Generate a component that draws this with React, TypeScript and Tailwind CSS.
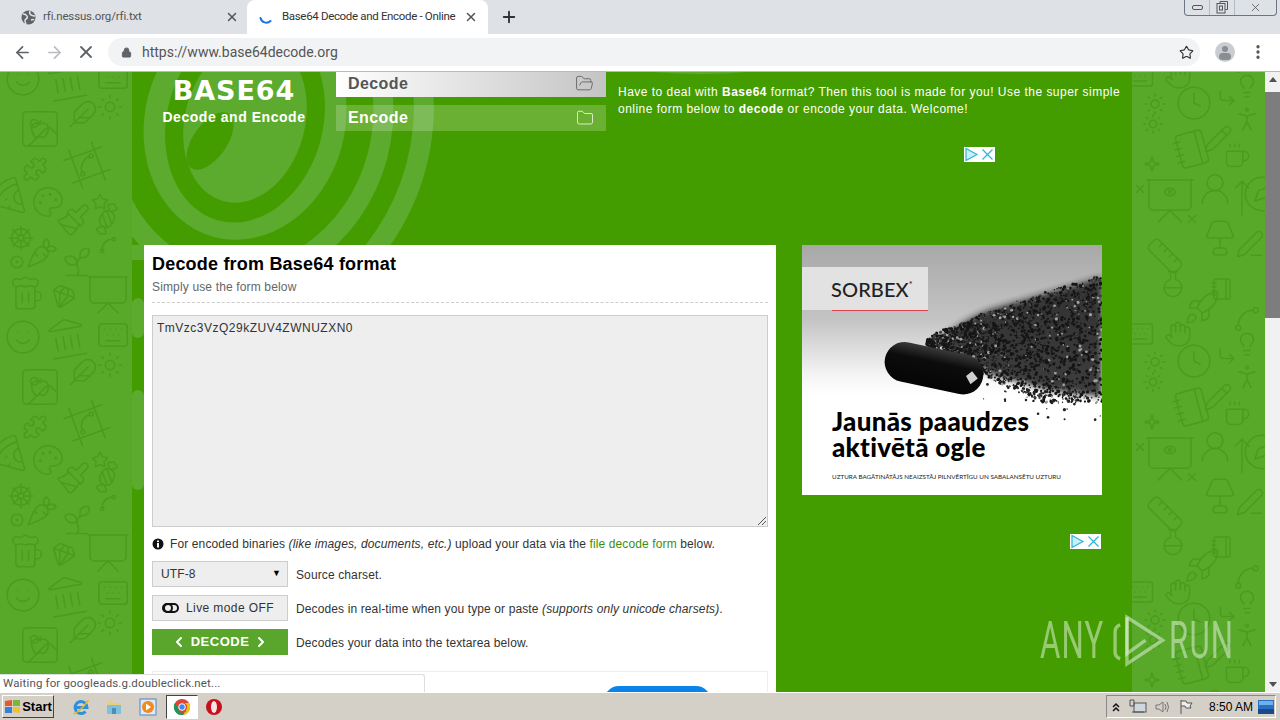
import React from 'react';
import {
  Apple, ArrowLeft, ArrowRight, Beer, Candy, Carrot, ChevronLeft, ChevronRight, CircleDot, Clock, Coffee, Compass, CornerDownRight, EllipsisVertical,
  Feather, FlaskRound, Folder, FolderOpen, Frame, Gem, Hand, Image, Keyboard, Lamp, Landmark, Lightbulb, Lock, MoveUp, Notebook, Palette, Paintbrush,
  PenLine, Pencil, PersonStanding, Pizza, Plus, Presentation, Puzzle, Rocket, Ruler, ShipWheel, Smile, Sparkle, Spline, Sprout, Star, Sun, UserRound, X, Eye,
} from 'lucide-react';

const sans = "font-['Liberation_Sans',Arial,sans-serif]";

type Doodle = [typeof Sun, number, number, number, number?];

// page coordinates of the doodles, the wallpaper repeats every 258px
const leftDoodles: Doodle[] = [
  [ShipWheel, 21, 238, 28], [Carrot, 42, 253, 34], [CircleDot, 17, 262, 14], [Sprout, 77, 262, 36], [Spline, 108, 245, 20],
  [Beer, 27, 293, 38], [Gem, 63, 297, 26, 20], [Presentation, 108, 295, 48], [Smile, 23, 337, 38], [Landmark, 67, 338, 44, -10],
  [Keyboard, 113, 335, 34], [Sun, 110, 365, 28], [Image, 40, 387, 46], [Apple, 40, 387, 20], [Feather, 83, 372, 30],
  [Frame, 87, 423, 48, -20], [Spline, 87, 423, 24, -20], [Puzzle, 35, 427, 26], [Pizza, 7, 453, 42], [Palette, 48, 460, 34],
  [Star, 100, 460, 18], [Paintbrush, 73, 478, 36], [Candy, 107, 477, 32, -20],
];

const rightDoodles: Doodle[] = [
  [Clock, 1194, 103, 38], [Lightbulb, 1247, 86, 26], [CornerDownRight, 1227, 98, 20], [PersonStanding, 1247, 119, 32], [Sun, 1155, 104, 24], [Sun, 1153, 124, 22],
  [Notebook, 1192, 149, 40, -15], [Pencil, 1218, 139, 30], [Coffee, 1237, 156, 28], [Sparkle, 1152, 164, 16], [Presentation, 1170, 201, 56], [Eye, 1170, 192, 13],
  [UserRound, 1215, 189, 38], [MoveUp, 1242, 198, 40], [Compass, 1262, 194, 40], [X, 1140, 189, 14], [X, 1192, 219, 14], [Lamp, 1220, 238, 40], [Ruler, 1165, 256, 40],
  [PenLine, 1250, 244, 30], [FlaskRound, 1173, 284, 30], [Notebook, 1222, 289, 24], [Rocket, 1202, 308, 38], [Hand, 1178, 334, 28], [Spline, 1247, 319, 30], [Keyboard, 1140, 334, 30],
];

function DoodleColumn({ doodles, left, width }: { doodles: Doodle[]; left: number; width: number }) {
  return (
    <div className="shrink-0 bg-[#58a82a]" style={{ width }}>
      <svg width={width} height="620" viewBox={`${left} 72 ${width} 620`} className="block text-[#4b9b1e]">
        {[-516, -258, 0, 258, 516].map(shift => (
          <g key={shift} transform={`translate(0 ${shift})`}>
            {doodles.map(([Icon, cx, cy, size, rot], i) => (
              <g key={i} transform={rot ? `rotate(${rot} ${cx} ${cy})` : undefined}>
                <Icon x={cx - size / 2} y={cy - size / 2} size={size} strokeWidth={1.5} absoluteStrokeWidth />
              </g>
            ))}
          </g>
        ))}
      </svg>
    </div>
  );
}

function AdChoices() {
  return (
    <div className="flex h-[15px] w-[31px] items-center justify-between bg-white">
      <svg width="15" height="15" viewBox="0 0 15 15" fill="none" stroke="#2bb6d6" strokeWidth="1.2">
        <path d="M2 1.5v12L13 7.5z" fill="#cdeef6" />
      </svg>
      <svg width="15" height="15" viewBox="0 0 15 15" fill="none" stroke="#2bb6d6" strokeWidth="1.2">
        <path d="M2.5 2.5l10 10M12.5 2.5l-10 10" />
      </svg>
    </div>
  );
}

// charcoal pile for the ad picture
function Pile() {
  const dots: React.ReactNode[] = [];
  let seed = 7;
  const rnd = () => {
    seed = (seed * 16807) % 2147483647;
    return seed / 2147483647;
  };
  for (let i = 0; i < 2600; i++) {
    const x = 125 + rnd() * 175;
    const t = (x - 125) / 175;
    const top = 93 - 65 * Math.pow(t, 0.8) + rnd() * 6;
    const bottom = 100 + 58 * Math.min(1, t * 1.6);
    const y = top + rnd() * (bottom - top);
    const g = rnd();
    dots.push(<circle key={i} cx={x} cy={y} r={0.6 + rnd() * 1.1} fill={g > 0.94 ? '#a0a0a0' : g > 0.65 ? '#3a3a3a' : '#141414'} />);
  }
  for (let i = 0; i < 36; i++) {
    const x = 170 + rnd() * 130;
    dots.push(<circle key={`s${i}`} cx={x} cy={x > 235 ? 145 + rnd() * 30 : 132 + rnd() * 24} r={0.5 + rnd() * 1.2} fill="#222" />);
  }
  return (
    <svg className="absolute inset-0" width="300" height="250" viewBox="0 0 300 250">
      <defs>
        <filter id="soft"><feGaussianBlur stdDeviation="0.5" /></filter>
        <filter id="softer"><feGaussianBlur stdDeviation="3" /></filter>
        <linearGradient id="gloss" x1="0" y1="0" x2="0" y2="1">
          <stop offset="0" stopColor="#3a3a3a" />
          <stop offset="0.35" stopColor="#0c0c0c" />
          <stop offset="1" stopColor="#050505" />
        </linearGradient>
      </defs>
      <path d="M136 94 Q170 70 190 64 L300 32 L300 152 L250 146 L190 130 Z" fill="#1e1e1e" opacity="0.85" filter="url(#softer)" />
      <g filter="url(#soft)">{dots}</g>
      <g transform="rotate(12 131 123)">
        <rect x="82" y="103" width="100" height="40" rx="20" fill="url(#gloss)" />
        <path d="M170 118 l7 6 -6 7 -6 -7z" fill="#cfcfcf" />
      </g>
    </svg>
  );
}

function SorbexAd() {
  return (
    <div className="relative h-[250px] w-[300px] shrink-0 overflow-hidden bg-[linear-gradient(180deg,#a8a8a8_0%,#c4c4c4_30%,#f4f4f4_52%,#ffffff_60%)] font-['Lato',sans-serif] text-black">
      <Pile />
      <div className="relative flex h-full flex-col">
        <div className="mt-[22px] flex h-[43px] w-[126px] items-center bg-[#e2e2e2] pl-[29px] text-[20px] font-medium tracking-[0.1px] text-[#222]">
          SORBEX<span className="mb-2 text-[9px]">*</span>
        </div>
        <div className="ml-[30px] h-px w-[96px] bg-[#d8434f]" />
        <div className="mt-auto px-[30px] pb-[14px]">
          <div className="whitespace-nowrap text-[26px] font-black leading-[26px] tracking-[0.3px]">Jaunās paaudzes<br />aktivētā ogle</div>
          <div className="mt-[13px] whitespace-nowrap text-[6.3px] leading-[8px] text-[#222]">UZTURA BAGĀTINĀTĀJS NEAIZSTĀJ PILNVĒRTĪGU UN SABALANSĒTU UZTURU</div>
        </div>
      </div>
    </div>
  );
}

function DecodeCard() {
  return (
    <div className={`${sans} h-[447px] w-[632px] shrink-0 overflow-hidden bg-white px-2 pt-2 text-[12px] tracking-[0.12px] text-[#333]`}>
      <h1 className="text-[18px] font-bold leading-[22px] tracking-[0.2px] text-black">Decode from Base64 format</h1>
      <p className="mt-[4px] text-[12px] leading-[16px] tracking-[0.15px] text-[#666]">Simply use the form below</p>
      <div className="mt-[7px] border-b border-dashed border-[#ccc]" />
      <div className="relative mt-[12px] h-[212px] border border-[#ccc] bg-[#eeeeee] px-1 py-[5px] leading-[14px] tracking-[0.5px]">
        TmVzc3VzQ29kZUV4ZWNUZXN0
        <svg className="absolute bottom-0 right-0" width="10" height="10" viewBox="0 0 10 10" stroke="#555" strokeWidth="1">
          <path d="M1 9L9 1M5 9L9 5" />
        </svg>
      </div>
      <div className="mt-[10px] flex h-[14px] items-center leading-[14px]">
        <svg width="12" height="12" viewBox="0 0 12 12" className="mr-[6px]">
          <circle cx="6" cy="6" r="5.5" fill="#111" />
          <rect x="5" y="5" width="2" height="4.5" fill="#fff" />
          <rect x="5" y="2.5" width="2" height="1.6" fill="#fff" />
        </svg>
        <span>For encoded binaries <i>(like images, documents, etc.)</i> upload your data via the <span className="text-[#3e8e0a]">file decode form</span> below.</span>
      </div>
      <div className="mt-[10px] flex flex-col gap-2">
        <div className="flex items-center gap-2">
          <div className="flex h-[26px] w-[136px] items-center justify-between border border-[#ccc] bg-[#eeeeee] pl-2 pr-[6px]">
            <span>UTF-8</span>
            <span className="text-[9px] text-black">▼</span>
          </div>
          <span className="pt-[2px]">Source charset.</span>
        </div>
        <div className="flex items-center gap-2">
          <div className="flex h-[26px] w-[136px] items-center gap-[7px] border border-[#ccc] bg-[#eeeeee] pl-[9px] tracking-[0.4px]">
            <svg width="17" height="12" viewBox="0 0 17 12" fill="none" stroke="#111" strokeWidth="2">
              <rect x="1" y="2" width="15" height="8" rx="4" />
              <circle cx="6" cy="6" r="4" />
            </svg>
            <span>Live mode OFF</span>
          </div>
          <span className="pt-[2px]">Decodes in real-time when you type or paste <i>(supports only unicode charsets)</i>.</span>
        </div>
        <div className="flex items-center gap-2">
          <div className="flex h-[26px] w-[136px] items-center justify-center gap-[4px] bg-[#5aa52b] text-[13px] font-bold tracking-[0.5px] text-white">
            <ChevronLeft size={16} strokeWidth={3} />
            <span>DECODE</span>
            <ChevronRight size={16} strokeWidth={3} />
          </div>
          <span className="pt-[2px]">Decodes your data into the textarea below.</span>
        </div>
      </div>
      <div className="mt-[16px] flex h-[60px] justify-end border border-[#eee] pr-[56px] pt-[14px]">
        <div className="h-[30px] w-[107px] rounded-[15px] bg-[#0a84e8]" />
      </div>
    </div>
  );
}

const LIGHT = '#5cab2e';
const DARK = '#449d00';

function Swirl() {
  const rings: [number, number, string][] = [
    [187, 213, LIGHT], [167, 193, DARK], [147, 167, LIGHT], [127, 147, DARK], [100, 120, LIGHT], [78, 103, DARK], [60, 83, LIGHT],
  ];
  return (
    <svg className="absolute left-0 top-0" width="1000" height="420" viewBox="0 0 1000 420">
      <svg width="1000" height="173" viewBox="0 1 1000 173">
        <g transform="rotate(15 113 50)">
          {rings.map(([rx, ry, fill]) => <ellipse key={rx} cx="113" cy="50" rx={rx} ry={ry} fill={fill} />)}
        </g>
        <ellipse cx="78" cy="70" rx="17" ry="33" transform="rotate(35 78 70)" fill={DARK} />
        <path d="M510 0 Q570 6 625 0 Z" fill={LIGHT} />
      </svg>
      <rect x="0" y="173" width="12" height="15" fill={LIGHT} />
      <rect x="0" y="226" width="12" height="40" rx="6" fill={LIGHT} />
      <rect x="0" y="318" width="12" height="100" rx="6" fill={LIGHT} />
    </svg>
  );
}

function SiteHeader() {
  return (
    <div className="relative flex h-[173px] shrink-0">
      <div className="relative flex w-[204px] flex-col items-center pt-[3px] text-white">
        <div className="font-['DejaVu_Sans',sans-serif] text-[27px] font-bold leading-[32px] tracking-[0.9px]">BASE64</div>
        <div className={`${sans} mt-[2px] text-[14px] font-bold leading-[16px] tracking-[0.55px]`}>Decode and Encode</div>
      </div>
      <div className={`${sans} relative flex h-[60px] w-[270px] flex-col gap-2 font-bold`}>
        <div className="flex h-[25px] items-center justify-between bg-[linear-gradient(90deg,#ffffff,#c4c4c4)] px-3 pb-[2px] text-[16px] tracking-[0.4px] text-[#555]">
          Decode
          <FolderOpen size={19} strokeWidth={1} color="#555" />
        </div>
        <div className="flex h-[26px] items-center justify-between bg-white/20 px-3 text-[16px] tracking-[0.4px] text-white">
          Encode
          <Folder size={18} strokeWidth={1} color="#fff" />
        </div>
      </div>
      <div className="relative ml-3 flex w-[504px] flex-col">
        <p className={`${sans} mt-[12px] text-[12px] leading-[17px] tracking-[0.48px] text-white`}>
          Have to deal with <b>Base64</b> format? Then this tool is made for you! Use the super simple online form below to <b>decode</b> or encode your data. Welcome!
        </p>
        <div className="ml-[346px] mt-[29px]">
          <AdChoices />
        </div>
      </div>
    </div>
  );
}

function Browser() {
  return (
    <div className="shrink-0 font-['Roboto',sans-serif]">
      <div className="relative flex h-[34px] items-end bg-[#dee1e6] text-[12px]">
        <div className="flex h-[34px] w-[247px] items-center pl-[21px] text-[#555]">
          <svg width="15" height="15" viewBox="0 0 15 15" fill="none">
            <circle cx="7.500" cy="7.500" r="7" fill="#5f6368" />
            <path d="M2 4q3 0 4 2t-1 3 0 5M9 1q-1 3 1 4t4 1M10 10q2-1 3 0" stroke="#dee1e6" strokeWidth="1.500" />
          </svg>
          <span className="ml-[7px] flex-1 text-[11.5px] tracking-[-0.15px]">rfi.nessus.org/rfi.txt</span>
          <X size={14} className="mr-[8px]" color="#555" strokeWidth={2.5} />
        </div>
        <div className="flex h-[34px] w-[241px] items-center rounded-t-[8px] bg-white pl-[12px] text-[#333]">
          <svg width="14" height="14" viewBox="0 0 14 14" fill="none" stroke="#1a73e8" strokeWidth="2" strokeLinecap="round">
            <path d="M1.500 8a6 6 0 0 0 10 3" />
          </svg>
          <span className="ml-[9px] flex-1 whitespace-nowrap text-[11.5px] tracking-[-0.33px]">Base64 Decode and Encode - Online</span>
          <X size={14} className="mr-[10px]" color="#555" strokeWidth={2.5} />
        </div>
        <Plus size={18} className="mb-[8px] ml-3" color="#333" strokeWidth={2.5} />
        <div className="absolute right-[3px] top-0 flex h-[16px] w-[93px] rounded-b-[4px] border border-t-0 border-[#6d7580] text-[#555]">
          <div className="flex w-[25px] items-center justify-center border-r border-[#b5bbc4]">
            <div className="h-[5px] w-[11px] rounded-[2px] border border-[#555]" />
          </div>
          <div className="flex w-[25px] items-center justify-center border-r border-[#b5bbc4]">
            <svg width="12" height="13" viewBox="0 0 12 13" fill="none" stroke="#555">
              <path d="M4 2.500V.5h7.500v8H9.500" />
              <rect x="1" y="2.500" width="8" height="9.500" />
              <rect x="3.500" y="5" width="3" height="4" />
            </svg>
          </div>
          <div className="flex flex-1 items-center justify-center"><X size={13} strokeWidth={1.5} /></div>
        </div>
      </div>
      <div className="flex h-[38px] items-center border-b border-[#b9b9b9] bg-white pb-[1px]">
        <ArrowLeft size={19} className="ml-[13px]" color="#5f6368" strokeWidth={2.2} />
        <ArrowRight size={19} className="ml-[13px]" color="#b9bcc0" strokeWidth={2.2} />
        <X size={20} className="ml-[12px]" color="#5f6368" strokeWidth={2.2} />
        <div className="ml-[12px] flex h-[28px] w-[1092px] items-center rounded-full bg-[#f1f3f4] pl-[13px] pr-[5px]">
          <Lock size={11} fill="#5f6368" color="#5f6368" />
          <span className="ml-[10px] flex-1 text-[14px] text-[#555]">https://www.base64decode.org</span>
          <Star size={15} color="#333" strokeWidth={1.8} className="mr-[1px]" />
        </div>
        <div className="relative ml-[15px] h-[20px] w-[20px] overflow-hidden rounded-full bg-[#c9ccd0]">
          <div className="mx-auto mt-[4px] h-[6px] w-[6px] rounded-full bg-[#8a8d91]" />
          <div className="mx-auto mt-[1px] h-[7px] w-[12px] rounded-full bg-[#8a8d91]" />
        </div>
        <EllipsisVertical size={18} className="ml-[14px]" color="#555" strokeWidth={2.4} />
      </div>
    </div>
  );
}

function Scrollbar() {
  return (
    <div className="flex w-[15px] shrink-0 flex-col items-center bg-[#f1f1f1]">
      <div className="mt-[5px] h-0 w-0 border-x-[4px] border-b-[5px] border-x-transparent border-b-[#505050]" />
      <div className="mt-[10px] h-[226px] w-full bg-[#7d7d7d]" />
      <div className="mb-[5px] mt-auto h-0 w-0 border-x-[4px] border-t-[5px] border-x-transparent border-t-[#505050]" />
    </div>
  );
}

function Watermark() {
  return (
    <div className="absolute bottom-[21px] left-[1040px] flex h-[60px] items-center font-['Roboto',sans-serif] text-white/45">
      <span className="w-[70px] origin-left scale-x-[0.6] whitespace-nowrap text-[52px] tracking-[2px]">ANY</span>
      <svg width="56" height="62" viewBox="0 0 66 62" fill="none" stroke="currentColor" strokeWidth="4">
        <path d="M12 12 Q6 14 6 20 V44 Q6 50 12 52" />
        <path d="M20 3 L62 30 L20 58 Z" />
        <path d="M20 3 V46 L42 30" />
      </svg>
      <span className="ml-[3px] w-[68px] origin-left scale-x-[0.6] whitespace-nowrap text-[52px] tracking-[2px]">RUN</span>
    </div>
  );
}

function Taskbar() {
  return (
    <div className="flex h-[28px] shrink-0 items-center border-t border-white bg-[#d4d0c8] pl-[2px] font-['Liberation_Sans',sans-serif]">
      <div className="flex h-[23px] w-[52px] items-center justify-center gap-[1px] border border-[#444] border-l-white border-t-white text-[13px] font-bold text-black">
        <svg width="17" height="17" viewBox="0 0 17 17">
          <path d="M1 3l7-1v6H1z" fill="#e8562a" />
          <path d="M9 2l7 0v6H9z" fill="#7cb63a" />
          <path d="M1 9h7v6H1z" fill="#3a7fd5" />
          <path d="M9 9h7v6l-7-1z" fill="#f2c12e" />
        </svg>
        Start
      </div>
      <svg width="18" height="18" viewBox="0 0 18 18" className="ml-[18px]" fill="none">
        <path d="M3 9.500h12a6 6 0 1 0-1.500 4" stroke="#2f8fdc" strokeWidth="3" />
        <path d="M1.500 16Q8 14 16.500 2" stroke="#e2b92c" strokeWidth="1.500" />
      </svg>
      <svg width="18" height="18" viewBox="0 0 18 18" className="ml-[15px]">
        <path d="M2 3h5l2 2h7v3H2z" fill="#e8cf7c" />
        <path d="M2 7h14v9H2z" fill="#7fc0dc" />
        <rect x="7" y="10" width="4" height="6" fill="#4a8fb5" />
      </svg>
      <svg width="18" height="18" viewBox="0 0 18 18" className="ml-[16px]">
        <rect x="1" y="1" width="16" height="16" fill="#dfe9f5" stroke="#4f86c6" />
        <circle cx="9" cy="9" r="6" fill="#ee8a1f" />
        <path d="M7 5.500l5 3.500-5 3.500z" fill="#fff" />
      </svg>
      <div className="ml-[9px] flex h-[24px] w-[32px] items-center justify-center border border-[#444] border-b-white border-r-white bg-white">
        <svg width="18" height="18" viewBox="0 0 18 18">
          <circle cx="9" cy="9" r="8" fill="#db4437" />
          <path d="M16 5a8 8 0 0 1-6 12l3.500-6A4 4 0 0 0 9 5z" fill="#f4c20d" />
          <path d="M10 17a8 8 0 0 1-8-12l3.500 6A4 4 0 0 0 13.500 11z" fill="#0f9d58" />
          <circle cx="9" cy="9" r="3.300" fill="#4285f4" stroke="#fff" />
        </svg>
      </div>
      <svg width="18" height="18" viewBox="0 0 18 18" className="ml-[7px]" fill="none">
        <circle cx="9" cy="9" r="8" fill="#c8101c" />
        <ellipse cx="9" cy="9" rx="3" ry="6" fill="#f5e5e5" />
      </svg>
      <div className="ml-auto mr-[4px] flex h-[23px] w-[170px] items-center border border-[#888] border-b-white border-r-white text-[12px] text-black">
        <svg width="10" height="10" viewBox="0 0 10 10" className="ml-[4px]" fill="none" stroke="#111" strokeWidth="1.500">
          <path d="M2 5l3-3 3 3M2 9l3-3 3 3" />
        </svg>
        <svg width="18" height="16" viewBox="0 0 18 16" className="ml-[8px]" fill="none" stroke="#555">
          <rect x="5" y="4" width="12" height="9" fill="#cfd8dc" />
          <path d="M1 1h4v6H1zM3 13h12" />
        </svg>
        <svg width="16" height="16" viewBox="0 0 16 16" className="ml-[7px]" fill="none" stroke="#777">
          <path d="M2 6h3l4-3v10l-4-3H2zM11 5q2 3 0 6M13 3q3 5 0 10" />
        </svg>
        <svg width="16" height="16" viewBox="0 0 16 16" className="ml-[8px]" fill="none" stroke="#555">
          <path d="M3 1v14M3 2h5l1 2h5l-2 3 1 2H8L7 7H3" fill="#eee" />
        </svg>
        <span className="ml-[15px] whitespace-nowrap">8:50 AM</span>
        <svg width="16" height="14" viewBox="0 0 16 14" className="ml-auto mr-[1px]">
          <rect width="16" height="14" fill="#2a6fc4" />
          <rect y="9" width="16" height="5" fill="#174a8c" />
          <rect x="1" y="1" width="14" height="4" fill="#6fb0ea" />
        </svg>
      </div>
    </div>
  );
}

export default function App() {
  return (
    <div className="flex h-[720px] w-[1280px] flex-col overflow-hidden">
      <Browser />
      <div className="relative flex min-h-0 flex-1">
        <DoodleColumn doodles={leftDoodles} left={0} width={132} />
        <div className="relative flex w-[1000px] shrink-0 flex-col overflow-hidden bg-[#449d00]">
          <Swirl />
          <SiteHeader />
          <div className="relative flex pl-3">
            <DecodeCard />
            <div className="ml-[26px] flex flex-col">
              <SorbexAd />
              <div className="ml-[268px] mt-[39px]">
                <AdChoices />
              </div>
            </div>
          </div>
        </div>
        <DoodleColumn doodles={rightDoodles} left={1132} width={133} />
        <Scrollbar />
        <Watermark />
        <div className="absolute bottom-0 left-0 flex h-[18px] w-[425px] items-center rounded-tr-[3px] border-r border-t border-[#ddd] bg-white pl-[3px] font-['Roboto',sans-serif] text-[11.5px] tracking-[0.15px] text-[#555]">
          Waiting for googleads.g.doubleclick.net...
        </div>
      </div>
      <Taskbar />
    </div>
  );
}
